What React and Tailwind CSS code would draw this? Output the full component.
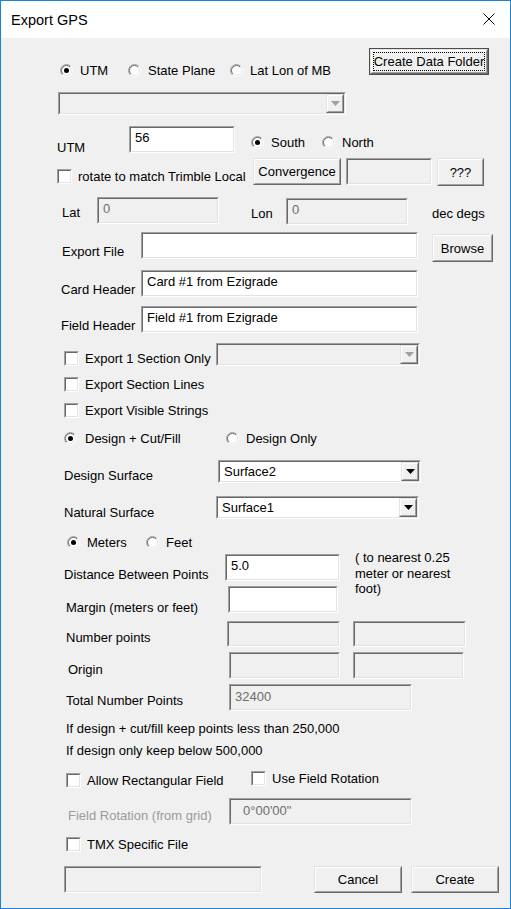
import React from "react";

function Sunken({ className = "", bg = "bg-white", children }) {
  return (
    <div className={`shrink-0 border border-t-[#a0a0a0] border-l-[#a0a0a0] border-b-white border-r-white ${className}`}>
      <div className={`w-full h-full border border-t-[#696969] border-l-[#696969] border-b-[#e3e3e3] border-r-[#e3e3e3] ${bg}`}>
        {children}
      </div>
    </div>
  );
}

function Raised({ className = "", children }) {
  return (
    <div className={`shrink-0 border border-t-[#e3e3e3] border-l-[#e3e3e3] border-b-[#696969] border-r-[#696969] ${className}`}>
      <div className="w-full h-full border border-t-white border-l-white border-b-[#a0a0a0] border-r-[#a0a0a0] bg-[#f0f0f0] flex items-center justify-center text-[13px] leading-[15px] whitespace-nowrap">
        {children}
      </div>
    </div>
  );
}

function TextBox({ className = "", disabled = false, value = "", textClass = "pl-[4px] pt-[2px]", gray = false }) {
  return (
    <Sunken className={className} bg={disabled ? "bg-[#f0f0f0]" : "bg-white"}>
      <div className={`text-[13px] leading-[15px] whitespace-nowrap ${textClass} ${gray ? "text-[#6d6d6d]" : "text-black"}`}>{value}</div>
    </Sunken>
  );
}

function Arrow({ color }) {
  return (
    <svg width="9" height="5" viewBox="0 0 9 5">
      <polygon points="0,0 9,0 4.5,5" fill={color} />
    </svg>
  );
}

function Combo({ className = "", value = "", disabled = false }) {
  return (
    <Sunken className={className} bg={disabled ? "bg-[#f0f0f0]" : "bg-white"}>
      <div className="flex h-full">
        <div className="flex-1 pl-[4px] pt-[2px] text-[13px] leading-[15px] whitespace-nowrap">{value}</div>
        <Raised className="w-[18px] h-full">
          <Arrow color={disabled ? "#a0a0a0" : "#000000"} />
        </Raised>
      </div>
    </Sunken>
  );
}

function RadioDot({ checked }) {
  return (
    <svg width="13" height="13" viewBox="0 0 13 13" className="shrink-0">
      <circle cx="6.5" cy="6.5" r="5.5" fill="#ffffff" />
      <path d="M2.257 10.743A6 6 0 0 1 10.743 2.257" stroke="#a0a0a0" fill="none" />
      <path d="M10.743 2.257A6 6 0 0 1 2.257 10.743" stroke="#ffffff" fill="none" />
      <path d="M2.964 10.036A5 5 0 0 1 10.036 2.964" stroke="#696969" fill="none" />
      <path d="M10.036 2.964A5 5 0 0 1 2.964 10.036" stroke="#e3e3e3" fill="none" />
      {checked && <circle cx="6.5" cy="6.5" r="2.5" fill="#000000" />}
    </svg>
  );
}

function Radio({ className = "", checked = false, label, gap = "ml-[7px]" }) {
  return (
    <div className={`shrink-0 flex items-center h-[16px] ${className}`}>
      <RadioDot checked={checked} />
      <span className={`${gap} text-[13px] leading-[15px] whitespace-nowrap`}>{label}</span>
    </div>
  );
}

function Check({ className = "", label }) {
  return (
    <div className={`shrink-0 flex items-center h-[16px] ${className}`}>
      <div className="w-[15px] h-[15px] shrink-0 border border-t-[#a0a0a0] border-l-[#a0a0a0] border-b-white border-r-white">
        <div className="w-full h-full bg-white border border-t-[#696969] border-l-[#696969] border-b-[#e3e3e3] border-r-[#e3e3e3]" />
      </div>
      <span className="ml-[6px] text-[13px] leading-[15px] whitespace-nowrap">{label}</span>
    </div>
  );
}

function Label({ className = "", children }) {
  return <div className={`shrink-0 whitespace-nowrap text-[13px] leading-[15px] ${className}`}>{children}</div>;
}

export default function App() {
  return (
    <div className="w-[511px] h-[909px] border border-[#1883d7] bg-[#f0f0f0] text-black font-['Liberation_Sans',Arial,sans-serif] overflow-hidden">
      {/* Title bar */}
      <div className="flex h-[37px] bg-white items-start">
        <div className="ml-[10px] mt-[11px] text-[14.5px] leading-[16px] whitespace-nowrap">Export GPS</div>
        <svg className="ml-auto mr-[15px] mt-[12px]" width="12" height="12" viewBox="0 0 12 12">
          <path d="M0.5 0.5L11.5 11.5M11.5 0.5L0.5 11.5" stroke="#000" strokeWidth="1" />
        </svg>
      </div>

      <div className="flex flex-col h-[870px]">
        {/* R1 */}
        <div className="flex h-[50px] items-start shrink-0">
          <Radio className="ml-[59px] mt-[24px] w-[68px]" checked label="UTM" />
          <Radio className="mt-[24px] w-[102px]" label="State Plane" />
          <Radio className="mt-[24px] w-[139px]" label="Lat Lon of MB" />
          <div className="mt-[10px] w-[120px] h-[27px] border border-[#4d4d4d] shrink-0">
            <div className="w-full h-full border border-t-[#e3e3e3] border-l-[#e3e3e3] border-b-[#696969] border-r-[#696969]">
              <div className="w-full h-full border border-t-white border-l-white border-b-[#a0a0a0] border-r-[#a0a0a0] p-[1px]">
                <div className="w-full h-full border border-dotted border-black flex items-center justify-center text-[13px] leading-[15px] whitespace-nowrap">
                  Create Data Folder
                </div>
              </div>
            </div>
          </div>
        </div>

        {/* R2 */}
        <div className="flex h-[32px] items-start shrink-0">
          <Combo className="ml-[57px] mt-[4px] w-[288px] h-[23px]" disabled />
        </div>

        {/* R3 */}
        <div className="flex h-[36px] items-start shrink-0">
          <Label className="ml-[56px] mt-[20px] w-[72px]">UTM</Label>
          <TextBox className="mt-[6px] w-[106px] h-[27px]" value="56" />
          <Radio className="ml-[16px] mt-[14px] w-[71px]" checked label="South" />
          <Radio className="mt-[14px]" label="North" />
        </div>

        {/* R4 */}
        <div className="flex h-[34px] items-start shrink-0">
          <Check className="ml-[56px] mt-[12px] w-[196px]" label="rotate to match Trimble Local" />
          <Raised className="mt-[2px] w-[88px] h-[27px]">Convergence</Raised>
          <TextBox className="ml-[5px] mt-[2px] w-[86px] h-[27px]" disabled />
          <Raised className="ml-[5px] mt-[2px] w-[47px] h-[28px]">???</Raised>
        </div>

        {/* R5 */}
        <div className="flex h-[38px] items-start shrink-0">
          <Label className="ml-[61px] mt-[15px] w-[35px]">Lat</Label>
          <TextBox className="mt-[7px] w-[122px] h-[27px]" disabled gray value="0" />
          <Label className="ml-[32px] mt-[16px] w-[35px]">Lon</Label>
          <TextBox className="mt-[8px] w-[122px] h-[27px]" disabled gray value="0" />
          <Label className="ml-[24px] mt-[16px]">dec degs</Label>
        </div>

        {/* R6 */}
        <div className="flex h-[38px] items-start shrink-0">
          <Label className="ml-[61px] mt-[16px] w-[79px]">Export File</Label>
          <TextBox className="mt-[4px] w-[277px] h-[27px]" />
          <Raised className="ml-[14px] mt-[6px] w-[61px] h-[28px]">Browse</Raised>
        </div>

        {/* R7 */}
        <div className="flex h-[36px] items-start shrink-0">
          <Label className="ml-[60px] mt-[16px] w-[80px]">Card Header</Label>
          <TextBox className="mt-[4px] w-[277px] h-[27px]" value="Card #1 from Ezigrade" />
        </div>

        {/* R8 */}
        <div className="flex h-[38px] items-start shrink-0">
          <Label className="ml-[60px] mt-[16px] w-[80px]">Field Header</Label>
          <TextBox className="mt-[4px] w-[277px] h-[27px]" value="Field #1 from Ezigrade" />
        </div>

        {/* R9 */}
        <div className="flex h-[30px] items-start shrink-0">
          <Check className="ml-[63px] mt-[10px] w-[152px]" label="Export 1 Section Only" />
          <Combo className="mt-[3px] w-[204px] h-[23px]" disabled />
        </div>

        {/* R10 */}
        <div className="flex h-[26px] items-start shrink-0">
          <Check className="ml-[63px] mt-[6px]" label="Export Section Lines" />
        </div>

        {/* R11 */}
        <div className="flex h-[28px] items-start shrink-0">
          <Check className="ml-[63px] mt-[6px]" label="Export Visible Strings" />
        </div>

        {/* R12 */}
        <div className="flex h-[32px] items-start shrink-0">
          <Radio className="ml-[63px] mt-[6px] w-[162px]" checked gap="ml-[8px]" label="Design + Cut/Fill" />
          <Radio className="mt-[6px]" label="Design Only" />
        </div>

        {/* R13 */}
        <div className="flex h-[34px] items-start shrink-0">
          <Label className="ml-[63px] mt-[12px] w-[154px]">Design Surface</Label>
          <Combo className="mt-[4px] w-[203px] h-[23px]" value="Surface2" />
        </div>

        {/* R14 */}
        <div className="flex h-[36px] items-start shrink-0">
          <Label className="ml-[63px] mt-[15px] w-[152px]">Natural Surface</Label>
          <Combo className="mt-[6px] w-[203px] h-[23px]" value="Surface1" />
        </div>

        {/* R15 */}
        <div className="flex h-[24px] items-start shrink-0">
          <Radio className="ml-[66px] mt-[8px] w-[79px]" checked label="Meters" />
          <Radio className="mt-[8px]" label="Feet" />
        </div>

        {/* R16 */}
        <div className="flex h-[34px] items-start shrink-0">
          <Label className="ml-[63px] mt-[17px] w-[161px]">Distance Between Points</Label>
          <TextBox className="mt-[4px] w-[115px] h-[27px]" value="5.0" />
          <div className="ml-[15px] text-[13px] leading-[15.5px] whitespace-nowrap shrink-0">
            ( to nearest 0.25
            <br />
            meter or nearest
            <br />
            foot)
          </div>
        </div>

        {/* R17 */}
        <div className="flex h-[33px] items-start shrink-0">
          <Label className="ml-[65px] mt-[16px] w-[162px]">Margin (meters or feet)</Label>
          <TextBox className="mt-[2px] w-[110px] h-[27px]" />
        </div>

        {/* R18 */}
        <div className="flex h-[33px] items-start shrink-0">
          <Label className="ml-[65px] mt-[13px] w-[161px]">Number points</Label>
          <TextBox className="mt-[4px] w-[113px] h-[26px]" disabled />
          <TextBox className="ml-[13px] mt-[4px] w-[113px] h-[26px]" disabled />
        </div>

        {/* R19 */}
        <div className="flex h-[32px] items-start shrink-0">
          <Label className="ml-[67px] mt-[12px] w-[161px]">Origin</Label>
          <TextBox className="mt-[2px] w-[111px] h-[27px]" disabled />
          <TextBox className="ml-[13px] mt-[2px] w-[111px] h-[27px]" disabled />
        </div>

        {/* R20 */}
        <div className="flex h-[33px] items-start shrink-0">
          <Label className="ml-[65px] mt-[11px] w-[163px]">Total Number Points</Label>
          <TextBox className="mt-[2px] w-[183px] h-[27px]" disabled gray value="32400" textClass="pl-[4px] pt-[3px]" />
        </div>

        {/* R21 */}
        <div className="flex h-[23px] items-start shrink-0">
          <Label className="ml-[65px] mt-[6px]">If design + cut/fill keep points less than 250,000</Label>
        </div>

        {/* R22 */}
        <div className="flex h-[24px] items-start shrink-0">
          <Label className="ml-[65px] mt-[5px]">If design only keep below 500,000</Label>
        </div>

        {/* R23 */}
        <div className="flex h-[32px] items-start shrink-0">
          <Check className="ml-[65px] mt-[10px] w-[185px]" label="Allow Rectangular Field" />
          <Check className="mt-[8px]" label="Use Field Rotation" />
        </div>

        {/* R24 */}
        <div className="flex h-[36px] items-start shrink-0">
          <Label className="ml-[67px] mt-[14px] w-[161px] text-[#9b9b9b]">Field Rotation (from grid)</Label>
          <TextBox className="mt-[4px] w-[183px] h-[27px]" disabled gray value={"0\u00b000'00\""} textClass="pl-[12px] pt-[3px]" />
        </div>

        {/* R25 */}
        <div className="flex h-[30px] items-start shrink-0">
          <Check className="ml-[65px] mt-[6px]" label="TMX Specific File" />
        </div>

        {/* R26 */}
        <div className="flex h-[48px] items-start shrink-0">
          <TextBox className="ml-[63px] mt-[6px] w-[198px] h-[27px]" disabled />
          <Raised className="ml-[52px] mt-[6px] w-[88px] h-[27px]">Cancel</Raised>
          <Raised className="ml-[9px] mt-[6px] w-[88px] h-[27px]">Create</Raised>
        </div>
      </div>
    </div>
  );
}
